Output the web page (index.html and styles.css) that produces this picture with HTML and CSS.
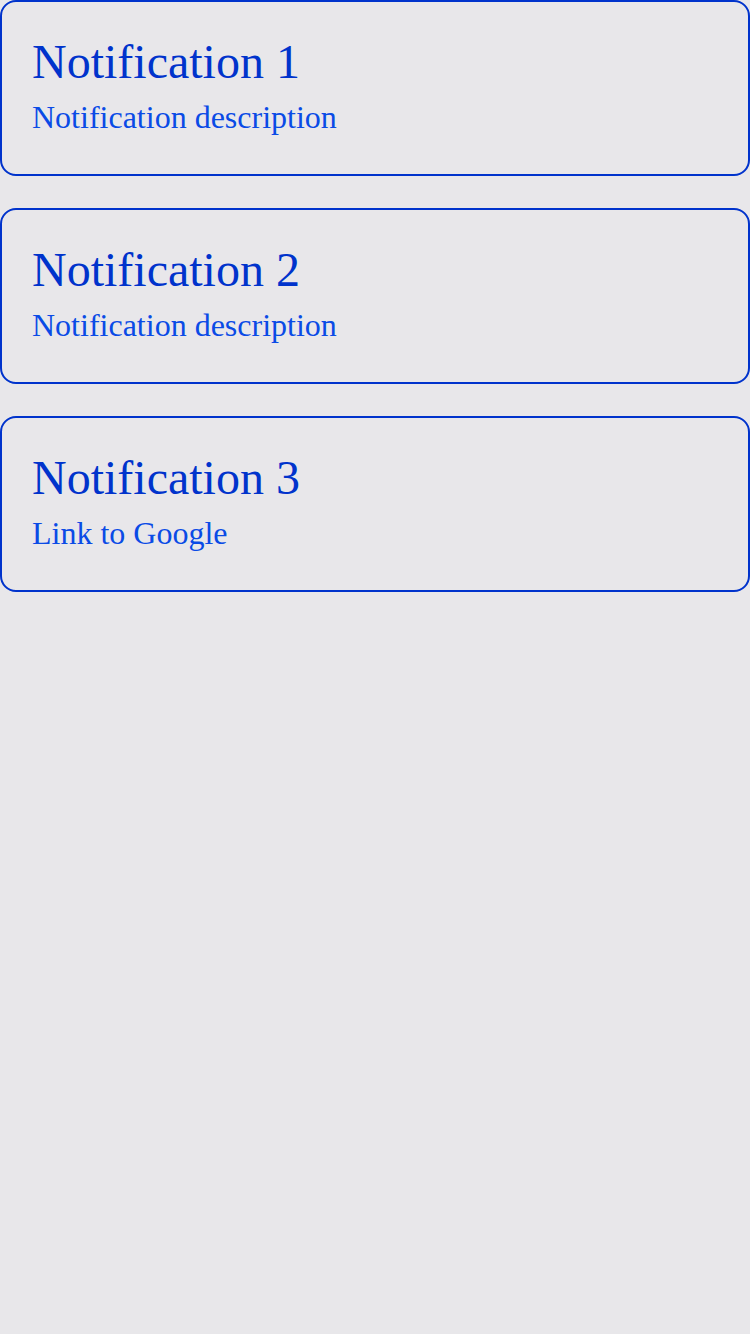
FILE: index.html
```html
<!DOCTYPE html>
<html>
<head>
<meta charset="utf-8">
<link rel="stylesheet" href="styles.css">
</head>
<body>
<div class="list">
  <div class="card">
    <div class="title">Notification 1</div>
    <div class="desc">Notification description</div>
  </div>
  <div class="card">
    <div class="title">Notification 2</div>
    <div class="desc">Notification description</div>
  </div>
  <div class="card">
    <div class="title">Notification 3</div>
    <a class="desc link" href="#">Link to Google</a>
  </div>
</div>
</body>
</html>
```
FILE: styles.css
```css
html, body {
  margin: 0;
  padding: 0;
  background: #e8e7ea;
  font-family: "Liberation Serif", "Times New Roman", serif;
}
.list {
  display: flex;
  flex-direction: column;
  gap: 32px;
}
.card {
  display: flex;
  flex-direction: column;
  height: 176px;
  box-sizing: border-box;
  border: 2px solid #0033cc;
  border-radius: 16px;
  padding: 32px 30px 0 30px;
}
.title {
  font-size: 48px;
  color: #0033cc;
  margin-bottom: 10px;
}
.desc {
  font-size: 32px;
  color: #0a4be6;
  text-decoration: none;
}
```
